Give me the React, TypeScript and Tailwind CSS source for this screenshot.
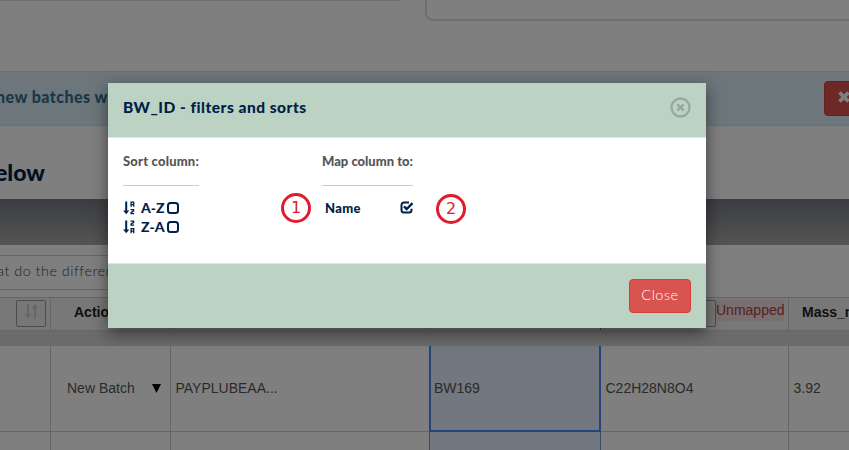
import React from "react";

const brand = "font-['Lato','Open_Sans',sans-serif]";

function SortIcon({ top, bottom }: { top: string; bottom: string }) {
  return (
    <svg width="13" height="14" viewBox="0 0 13 14" className="-mt-0.5 shrink-0 text-[#002147]">
      <path d="M2.200 0.500h2v9h2.100L3.200 13.200 0.100 9.500h2.100z" fill="currentColor" />
      <g fill="none" stroke="currentColor" strokeWidth="1.3">
        <path d={top} />
        <path d={bottom} />
      </g>
    </svg>
  );
}

const A_TOP = "M8.1 5.800V1.100h2.600v4.700M8.100 3.700h2.600";
const Z_BOTTOM = "M7.500 8.600h3.100v1.200l-2.500 1.800v1h3";
const Z_TOP = "M7.500 1.100h3.100v1.200l-2.500 1.800v1h3";
const A_BOTTOM = "M8.100 13.300V8.600h2.600v4.700M8.100 11.200h2.600";

function Unchecked() {
  return <span className="-mt-px ml-px block h-3 w-3 shrink-0 rounded-[3.5px] border-2 border-[#002147]" />;
}

function Checked() {
  return (
    <svg width="14" height="13" viewBox="0 0 14 13" fill="none" stroke="#002147" className="-mt-[3px]">
      <path d="M9 1.500H4A2.500 2.500 0 0 0 1.500 4v5A2.500 2.500 0 0 0 4 11.500h5A2.500 2.500 0 0 0 11.500 9V7.800" strokeWidth="2" />
      <path d="M4 5.300l2.700 2.700L12.500 2.200" strokeWidth="2.400" />
    </svg>
  );
}

function Badge({ n, className }: { n: string; className: string }) {
  return (
    <span
      className={`absolute flex h-[30px] w-[30px] items-center justify-center rounded-full border-[3px] border-[#e01b2b] font-['DejaVu_Sans',sans-serif] text-[16px] leading-none text-[#e01b2b] ${className}`}
    >
      {n}
    </span>
  );
}

function Page() {
  return (
    <div className="flex h-full flex-col bg-white font-['Liberation_Sans',sans-serif] text-sm text-[#555]">
      <div className="flex h-[71px] shrink-0 items-start">
        <div className="h-px w-[401px] bg-[#ddd]" />
        <div className="ml-6 h-[21px] flex-1 rounded-bl-lg border-b-2 border-l-2 border-[#ddd]" />
      </div>
      <div className="flex h-[55px] shrink-0 items-center border-y border-[#bce8f1] bg-[#d9edf7]">
        <span className={`-ml-[4px] -mt-0.5 whitespace-nowrap text-[16px] font-black tracking-[0.45px] text-[#31708f] ${brand}`}>new batches w</span>
        <div className="-mr-3 ml-auto flex h-[35px] w-[37px] items-start justify-start rounded border border-[#d43f3a] bg-[#d9534f] pl-[13px] pt-[9px]">
          <svg width="12" height="12" viewBox="0 0 12 12" stroke="white" strokeWidth="3.800">
            <path d="M1.500 1.500l9 9M10.500 1.500l-9 9" />
          </svg>
        </div>
      </div>
      <div className={`flex h-[73px] shrink-0 items-center pt-[19px] text-[23px] font-black text-[#002147] ${brand}`}>
        <span className="-ml-[5px]">elow</span>
      </div>
      <div className="h-[46px] shrink-0 bg-linear-to-b from-[#777a82] to-[#aaa]" />
      <div className="flex h-[52px] shrink-0 items-start pt-[10px]">
        <div className={`flex h-[35px] w-[300px] items-center border-y border-[#ccc] text-[14.500px] font-light tracking-[0.45px] text-[#444] ${brand}`}>
          <span className="-ml-[3px] -mt-0.5 whitespace-nowrap">at do the differen</span>
        </div>
      </div>
      <div className="grid h-[34px] shrink-0 grid-cols-[51px_120px_259px_171px_188px_1fr] border-y border-[#ccc] bg-[#f0f0f0] font-bold text-[#222]">
        <div className="flex items-start justify-end border-r border-[#ccc] pr-1 pt-[2px]">
          <div className="flex h-[27px] w-[30px] justify-center rounded-[2px] border border-[#999] bg-[#eee] pt-[3px]">
            <svg width="13" height="15" viewBox="0 0 13 15" fill="#ccc">
              <path d="M2 0h2v10h2.500L3 14.500 0 10h2zM9 15h2V4.500h2L10 0 6.500 4.500H9z" />
            </svg>
          </div>
        </div>
        <div className="flex items-center border-r border-[#ccc] pl-[23px] pb-[5px]">Actio</div>
        <div className="border-r border-[#ccc]" />
        <div className="border-r border-[#4b89ff]" />
        <div className="flex items-start justify-end border-r border-[#ccc] pr-1 pt-[2px]">
          <div className="h-[27px] w-[30px] rounded-[2px] border border-[#999] bg-[#eee]" />
          <span className="h-[21px] w-[68px] whitespace-nowrap bg-[#f2dede] font-normal leading-5 text-[#a94442]">Unmapped</span>
        </div>
        <div className="flex items-center pl-[13px] pb-[5px]">Mass_m</div>
      </div>
      <div className="h-[15px] shrink-0 bg-[#d6d6d6]" />
      <div className="grid h-[86px] shrink-0 grid-cols-[51px_120px_258px_172px_188px_1fr] border-b border-[#ccc]">
        <div className="border-r border-[#ccc]" />
        <div className="flex items-center justify-between border-r border-[#ccc] pb-0.5 pl-4 pr-[9px]">
          <span>New Batch</span>
          <svg width="9" height="9" viewBox="0 0 9 9" className="mt-0.5"><path d="M0 0h9L4.500 9z" fill="black" /></svg>
        </div>
        <div className="flex items-center pb-0.5 pl-[4.500px]">PAYPLUBEAA...</div>
        <div className="-mb-px flex items-center border-x-2 border-b-2 border-[#4b89ff] bg-[#e7eefe] pl-[3px]">BW169</div>
        <div className="flex items-center border-r border-[#ccc] pb-0.5 pl-[4.500px]">C22H28N8O4</div>
        <div className="flex items-center pb-0.5 pl-[4.500px]">3.92</div>
      </div>
      <div className="grid h-[18px] shrink-0 grid-cols-[51px_120px_259px_171px_188px_1fr]">
        <div className="border-r border-[#ccc]" />
        <div className="border-r border-[#ccc]" />
        <div className="border-r border-[#7295dd]" />
        <div className="border-r border-[#7295dd] bg-[#e7eefe]" />
        <div className="border-r border-[#ccc]" />
        <div />
      </div>
    </div>
  );
}

function Dialog() {
  return (
    <div className={`ml-[108px] mt-[83px] flex h-[245px] w-[598px] flex-col bg-white text-[#002147] shadow-[0_5px_15px_rgba(0,0,0,0.5)] ${brand}`}>
      <div className="flex h-[55px] shrink-0 items-center justify-between border-b border-[#e5e5e5] bg-[#bcd3c3] px-[15px]">
        <h4 className="-mt-[5px] whitespace-nowrap text-[15.500px] font-black tracking-[0.5px]">BW_ID - filters and sorts</h4>
        <svg width="21" height="21" viewBox="0 0 21 21" fill="none" stroke="#96a99c" className="-mt-[5px]">
          <circle cx="10.500" cy="10.500" r="9" strokeWidth="2.300" />
          <path d="M7.300 7.300l6.400 6.400M13.700 7.300l-6.400 6.400" strokeWidth="2.400" />
        </svg>
      </div>
      <div className="flex flex-1 items-start pl-[15px] pt-[14px] text-[13px] font-black">
        <div className="w-[199px]">
          <div className="h-[34px] w-[76px] whitespace-nowrap border-b border-[#ccc] leading-[18px] tracking-[0.2px] text-[#555]">Sort column:</div>
          <div className="mt-[13px] flex h-[19px] items-center">
            <SortIcon top={A_TOP} bottom={Z_BOTTOM} />
            <span className="-mt-0.5 ml-[5px] w-[25px] whitespace-nowrap text-[14px]">A-Z</span>
            <Unchecked />
          </div>
          <div className="flex h-[19px] items-center">
            <SortIcon top={Z_TOP} bottom={A_BOTTOM} />
            <span className="-mt-0.5 ml-[5px] w-[25px] whitespace-nowrap text-[14px]">Z-A</span>
            <Unchecked />
          </div>
        </div>
        <div className="w-[92px]">
          <div className="h-[34px] w-[91px] whitespace-nowrap border-b border-[#ccc] leading-[18px] text-[#555]">Map column to:</div>
          <div className="mt-[13px] flex h-[19px] items-center justify-between pl-[3px]">
            <span className="tracking-[0.3px]">Name</span>
            <Checked />
          </div>
        </div>
      </div>
      <div className="flex h-[65px] shrink-0 items-start justify-end border-t border-[#e5e5e5] bg-[#bcd3c3] pr-[15px] pt-[15px]">
        <button className="h-[34px] w-[62px] rounded border border-[#d43f3a] bg-[#d9534f] pb-[3px] text-[14.500px] font-light tracking-[0.5px] text-white">Close</button>
      </div>
    </div>
  );
}

export default function App() {
  return (
    <div className="relative h-[450px] w-[849px] overflow-hidden">
      <Page />
      <div className="absolute inset-0 flex items-start bg-black/50">
        <Dialog />
        <Badge n="1" className="left-[281px] top-[193px]" />
        <Badge n="2" className="left-[436px] top-[194px]" />
      </div>
    </div>
  );
}
